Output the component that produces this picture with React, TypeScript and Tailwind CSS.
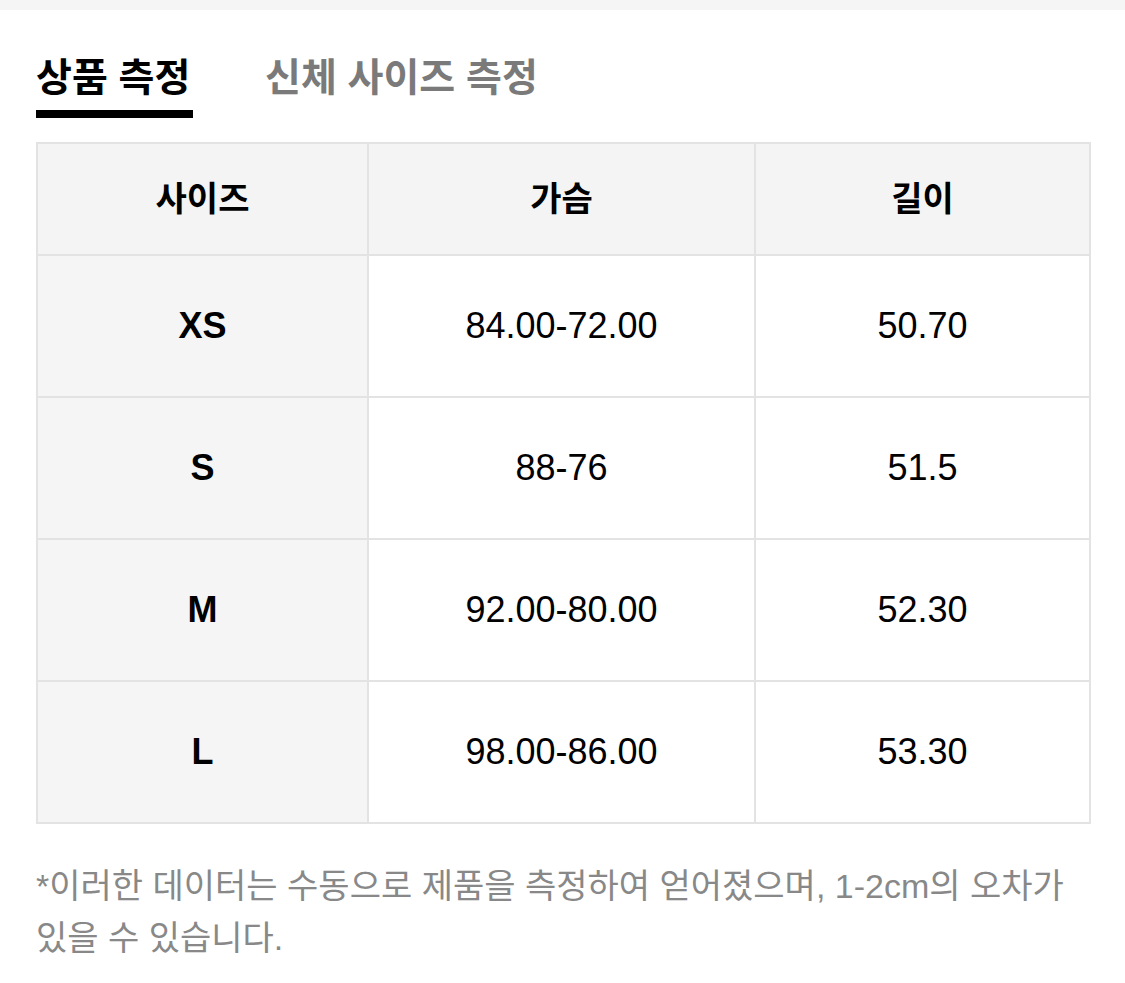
const rows = [
  { size: 'XS', chest: '84.00-72.00', length: '50.70' },
  { size: 'S', chest: '88-76', length: '51.5' },
  { size: 'M', chest: '92.00-80.00', length: '52.30' },
  { size: 'L', chest: '98.00-86.00', length: '53.30' },
];

const font = { fontFamily: '"Liberation Sans", "Noto Sans CJK KR", sans-serif' };

export default function App() {
  return (
    <div className="min-h-[983px] w-[1125px] bg-white" style={font}>
      <div className="h-[10px] bg-[#f5f5f5]" />
      <div className="px-[36px]">
        <div className="flex items-start gap-[72px] pt-[44px]">
          <div className="flex w-[157px] flex-col">
            <span className="text-[39px] font-bold leading-[48px] whitespace-nowrap text-black">상품 측정</span>
            <div className="mt-[8px] h-[8px] bg-black" />
          </div>
          <span className="text-[39px] font-bold leading-[48px] whitespace-nowrap text-[#7a7a7a]">신체 사이즈 측정</span>
        </div>

        <table className="mt-[24px] w-[1053px] table-fixed border-collapse border-2 border-[#e3e3e3]">
          <colgroup>
            <col className="w-[331px]" />
            <col className="w-[387px]" />
            <col className="w-[335px]" />
          </colgroup>
          <thead>
            <tr className="h-[112px] bg-[#f4f4f4]">
              {['사이즈', '가슴', '길이'].map((h) => (
                <th key={h} className="border-2 border-[#e3e3e3] text-center text-[34px] font-bold text-black">
                  {h}
                </th>
              ))}
            </tr>
          </thead>
          <tbody>
            {rows.map((r) => (
              <tr key={r.size} className="h-[142px]">
                <td className="border-2 border-[#e3e3e3] bg-[#f5f5f5] text-center text-[36px] font-bold text-black">{r.size}</td>
                <td className="border-2 border-[#e3e3e3] text-center text-[36px] text-black">{r.chest}</td>
                <td className="border-2 border-[#e3e3e3] text-center text-[36px] text-black">{r.length}</td>
              </tr>
            ))}
          </tbody>
        </table>

        <p className="mt-[36px] text-[34px] leading-[52px] text-[#888888]">
          *이러한 데이터는 수동으로 제품을 측정하여 얻어졌으며, 1-2cm의 오차가 있을 수 있습니다.
        </p>
      </div>
    </div>
  );
}
